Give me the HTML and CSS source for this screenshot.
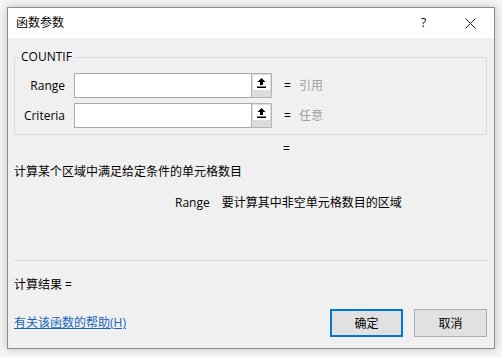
FILE: index.html
```html
<!DOCTYPE html>
<html lang="zh-CN">
<head>
    <meta charset="UTF-8">
    <title>函数参数</title>
    <link rel="stylesheet" href="styles.css">
</head>
<body>
    <div class="dialog">
        <div class="titlebar">
            <span class="title">函数参数</span>
            <span class="help">?</span>
            <span class="close">
                <svg width="11" height="11" viewBox="0 0 11 11"><path d="M0.5 0.5L10.5 10.5M10.5 0.5L0.5 10.5" stroke="#222" stroke-width="1" fill="none"/></svg>
            </span>
        </div>
        <div class="content">
            <fieldset class="group">
                <legend>COUNTIF</legend>
                <div class="arg-row">
                    <label>Range</label>
                    <div class="field"></div>
                    <div class="pick">
                        <span class="pick-icon">
                            <svg width="9" height="10" viewBox="0 0 9 10"><path d="M4.5 0L8.5 4H6V7H3V4H0.5Z" fill="#000"/><rect x="0" y="8.5" width="9" height="1.5" fill="#000"/></svg>
                        </span>
                    </div>
                    <span class="eq">=</span>
                    <span class="hint">引用</span>
                </div>
                <div class="arg-row">
                    <label>Criteria</label>
                    <div class="field"></div>
                    <div class="pick">
                        <span class="pick-icon">
                            <svg width="9" height="10" viewBox="0 0 9 10"><path d="M4.5 0L8.5 4H6V7H3V4H0.5Z" fill="#000"/><rect x="0" y="8.5" width="9" height="1.5" fill="#000"/></svg>
                        </span>
                    </div>
                    <span class="eq">=</span>
                    <span class="hint">任意</span>
                </div>
            </fieldset>
            <div class="value-eq">=</div>
            <div class="desc">计算某个区域中满足给定条件的单元格数目</div>
            <div class="arg-desc">
                <span class="arg-name">Range</span>
                <span>要计算其中非空单元格数目的区域</span>
            </div>
            <div class="separator"></div>
            <div class="result">计算结果 =</div>
            <div class="footer">
                <a class="help-link" href="#">有关该函数的帮助(H)</a>
                <button class="btn btn-default">确定</button>
                <button class="btn">取消</button>
            </div>
        </div>
    </div>
</body>
</html>
```

FILE: styles.css
```css
* {
    margin: 0;
    padding: 0;
    box-sizing: border-box;
}
body {
    font-family: "Open Sans", "Noto Sans CJK SC", sans-serif;
    font-size: 12px;
    line-height: 16px;
    color: #000;
    background: #f4f4f4;
}
.dialog {
    margin: 7px;
    width: 488px;
    height: 342px;
    border: 1px solid #8c8c8c;
    background: #f0f0f0;
    box-shadow: 0 0 8px rgba(0, 0, 0, 0.22);
    display: flex;
    flex-direction: column;
}
.titlebar {
    height: 30px;
    background: #fff;
    display: flex;
    align-items: center;
    padding-left: 8px;
}
.title {
    flex: 1;
}
.help {
    width: 10px;
    margin-right: 34px;
}
.close {
    width: 11px;
    height: 11px;
    margin-right: 18px;
    display: flex;
}
.content {
    flex: 1;
    padding: 11px 7px 0 6px;
}
.group {
    border: 1px solid #dcdcdc;
    border-radius: 0;
    padding: 8px 0 6px 0;
}
.group legend {
    margin-left: 4px;
    padding: 0 2px;
}
.arg-row {
    display: flex;
    align-items: center;
    height: 25px;
    margin-bottom: 5px;
}
.arg-row:last-child {
    margin-bottom: 0;
}
.arg-row label {
    width: 50px;
    text-align: right;
    margin-right: 9px;
}
.field {
    width: 177px;
    height: 25px;
    background: #fff;
    border: 1px solid #a9a9a9;
    border-right: none;
}
.pick {
    width: 21px;
    height: 25px;
    background: #dcdcdc;
    border: 1px solid #b4b4b4;
    padding: 1px;
}
.pick-icon {
    display: flex;
    align-items: center;
    justify-content: center;
    width: 17px;
    height: 15px;
    background: #fff;
}
.eq {
    margin-left: 12px;
    width: 15px;
}
.hint {
    color: #a0a0a0;
}
.value-eq {
    margin-top: 6px;
    padding-left: 269px;
}
.desc {
    margin-top: 7px;
}
.arg-desc {
    margin-top: 15px;
    padding-left: 161px;
}
.arg-name {
    margin-right: 9px;
}
.separator {
    margin-top: 49px;
    height: 1px;
    background: #dcdcdc;
    margin-right: -1px;
}
.result {
    margin-top: 16px;
}
.footer {
    margin-top: 16px;
    display: flex;
    align-items: center;
}
.help-link {
    flex: 1;
    color: #1565c0;
    text-decoration: underline;
}
.btn {
    width: 73px;
    height: 28px;
    font-family: inherit;
    font-size: 12px;
    background: #e1e1e1;
    border: 1px solid #adadad;
    margin-left: 11px;
}
.btn-default {
    border: 2px solid #0078d7;
}
```
